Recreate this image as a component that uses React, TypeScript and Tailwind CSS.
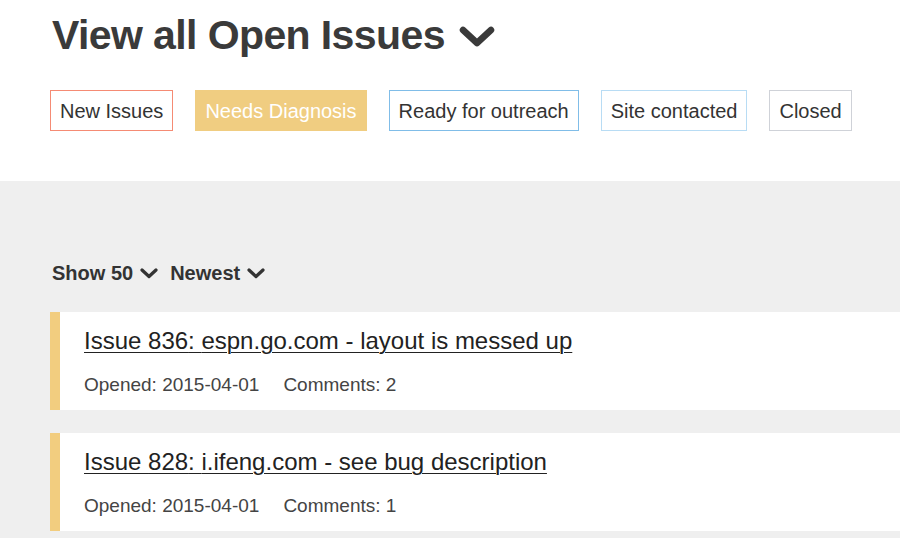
const filters = [
  { label: "New Issues", cls: "border-[#f58b74] text-[#333] bg-white" },
  { label: "Needs Diagnosis", cls: "border-[#f0cd81] bg-[#f0cd81] text-white" },
  { label: "Ready for outreach", cls: "border-[#80bde8] text-[#333] bg-white" },
  { label: "Site contacted", cls: "border-[#b8dcf4] text-[#333] bg-white" },
  { label: "Closed", cls: "border-[#cfd2d8] text-[#333] bg-white" },
];

const issues = [
  { num: 836, title: "espn.go.com - layout is messed up", opened: "2015-04-01", comments: 2 },
  { num: 828, title: "i.ifeng.com - see bug description", opened: "2015-04-01", comments: 1 },
];

function Chevron({ className }: { className: string }) {
  return (
    <svg viewBox="0 0 36 22" className={className} fill="none">
      <polyline
        points="4,4 18,17 32,4"
        stroke="currentColor"
        strokeWidth="6.5"
        strokeLinecap="round"
        strokeLinejoin="round"
      />
    </svg>
  );
}

export default function App() {
  return (
    <div
      className="w-[900px] h-[538px] overflow-hidden bg-white text-[#333]"
      style={{ fontFamily: '"Liberation Sans", Arial, sans-serif' }}
    >
      <header className="pl-[52px] pt-[12px] h-[181px]">
        <h1 className="flex items-center gap-[14px] text-[41px] leading-[46px] font-bold text-[#3a3a3a] tracking-[-0.6px]">
          View all Open Issues
          <Chevron className="w-[36px] h-[22px] mt-[3px] text-[#3a3a3a]" />
        </h1>
        <div className="flex gap-[22px] mt-[32px] -ml-[2px]">
          {filters.map((f) => (
            <button
              key={f.label}
              className={[
                "h-[41px] px-[9px] border text-[20px] leading-none",
                f.cls,
              ].join(" ")}
            >
              {f.label}
            </button>
          ))}
        </div>
      </header>
      <main className="bg-[#efefef] h-[357px] pl-[50px] pt-[82px]">
        <div className="flex items-center gap-[12px] text-[20px] font-bold text-[#333] pl-[2px] h-[20px]">
          <span className="flex items-center gap-[7px]">
            Show 50
            <Chevron className="w-[18px] h-[11px] mt-[1px]" />
          </span>
          <span className="flex items-center gap-[7px]">
            Newest
            <Chevron className="w-[18px] h-[11px] mt-[1px]" />
          </span>
        </div>
        <ul className="mt-[29px] flex flex-col gap-[23px]">
          {issues.map((i) => (
            <li
              key={i.num}
              className="bg-white border-l-[10px] border-[#f2cd7f] h-[98px] pl-[24px] pt-[14px]"
            >
              <a className="text-[24px] leading-[29px] text-[#222] underline underline-offset-[3px] decoration-1">
                Issue {i.num}: {i.title}
              </a>
              <div className="mt-[18px] text-[19px] leading-[22px] text-[#444] flex gap-[24px]">
                <span>Opened: {i.opened}</span>
                <span>Comments: {i.comments}</span>
              </div>
            </li>
          ))}
        </ul>
      </main>
    </div>
  );
}
